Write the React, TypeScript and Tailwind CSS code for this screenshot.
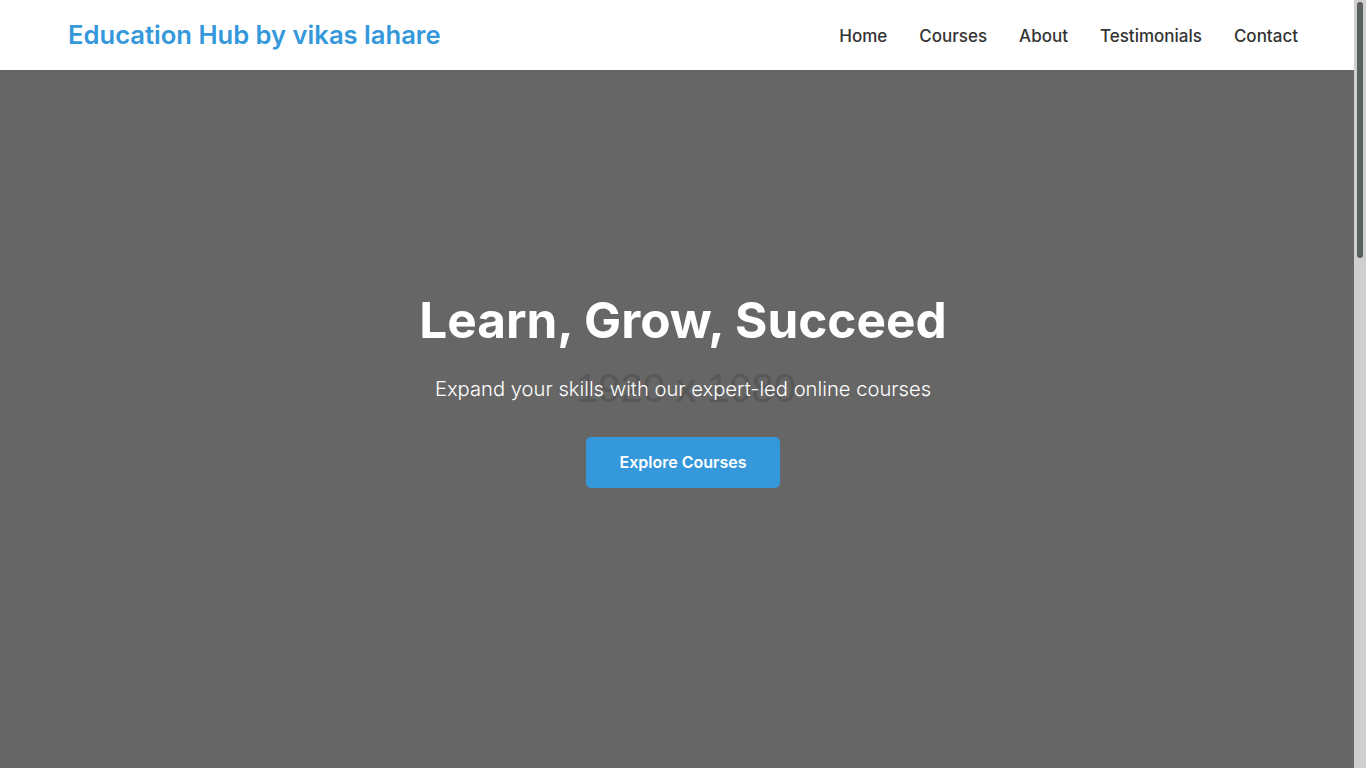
const font = { fontFamily: "Inter, 'Noto Sans', sans-serif" };

const navLinks = ["Home", "Courses", "About", "Testimonials", "Contact"];

const courses = [
  { title: "Web Development", text: "Build modern websites with HTML, CSS and JavaScript." },
  { title: "Data Science", text: "Analyse data and build models with Python." },
  { title: "UI/UX Design", text: "Design clean, usable interfaces from scratch." },
];

const testimonials = [
  { name: "Priya Sharma", text: "The courses are practical and easy to follow. I landed my first job!" },
  { name: "Rahul Verma", text: "Great instructors and a very supportive community." },
];

function Navbar() {
  return (
    <header className="sticky top-0 z-10 flex h-[70px] w-screen items-center justify-between bg-white px-[68px]">
      <a href="#" className="text-[25.6px] font-semibold text-[#3498db]">
        Education Hub by vikas lahare
      </a>
      <nav className="mt-[3px] flex items-center gap-8">
        {navLinks.map((l) => (
          <a key={l} href="#" className="text-[17px] font-medium text-[#333]">
            {l}
          </a>
        ))}
      </nav>
    </header>
  );
}

function Hero() {
  return (
    <section className="relative -mt-[70px] flex h-[768px] w-screen flex-col items-center bg-[#666] pt-[291px] text-center">
      {/* placeholder image label */}
      <span
        className="absolute left-[686px] top-[388px] -translate-x-1/2 -translate-y-1/2 text-[40px] text-[#585858]"
        style={{ fontFamily: "'Liberation Sans', Arial, sans-serif" }}
      >
        1920 x 1080
      </span>
      <div className="relative flex flex-col items-center">
        <h1 className="mb-[24px] text-[49.5px] font-bold leading-[1.2] text-white">Learn, Grow, Succeed</h1>
        <p className="mb-[32px] text-[20.2px] font-light text-white">
          Expand your skills with our expert-led online courses
        </p>
        <a href="#" className="rounded-[5px] bg-[#3498db] px-[34px] py-[13.5px] text-[16px] font-semibold text-white">
          Explore Courses
        </a>
      </div>
    </section>
  );
}

function Courses() {
  return (
    <section className="w-screen bg-[#f9f9f9] px-[68px] py-20">
      <h2 className="mb-12 text-center text-[36px] font-bold text-[#333]">Our Courses</h2>
      <div className="grid grid-cols-3 gap-8">
        {courses.map((c) => (
          <div key={c.title} className="overflow-hidden rounded-lg bg-white shadow-md">
            <div className="h-[200px] bg-[#ccc]" />
            <div className="p-6">
              <h3 className="mb-2 text-[20px] font-semibold text-[#333]">{c.title}</h3>
              <p className="mb-4 text-[15px] text-[#666]">{c.text}</p>
              <a href="#" className="inline-block rounded-[5px] bg-[#3498db] px-5 py-2 text-sm font-semibold text-white">
                Enroll Now
              </a>
            </div>
          </div>
        ))}
      </div>
    </section>
  );
}

function About() {
  return (
    <section className="w-screen bg-white px-[68px] py-20">
      <h2 className="mb-8 text-center text-[36px] font-bold text-[#333]">About Us</h2>
      <p className="mx-auto max-w-[800px] text-center text-[17px] leading-relaxed text-[#555]">
        Education Hub offers high-quality online courses taught by industry experts. Learn at your own pace,
        gain real-world skills and grow your career with us.
      </p>
    </section>
  );
}

function Testimonials() {
  return (
    <section className="w-screen bg-[#f9f9f9] px-[68px] py-20">
      <h2 className="mb-12 text-center text-[36px] font-bold text-[#333]">Testimonials</h2>
      <div className="grid grid-cols-2 gap-8">
        {testimonials.map((t) => (
          <div key={t.name} className="rounded-lg bg-white p-8 shadow-md">
            <p className="mb-4 text-[16px] italic text-[#555]">"{t.text}"</p>
            <p className="font-semibold text-[#3498db]">- {t.name}</p>
          </div>
        ))}
      </div>
    </section>
  );
}

function Contact() {
  return (
    <section className="w-screen bg-white px-[68px] py-20">
      <h2 className="mb-10 text-center text-[36px] font-bold text-[#333]">Contact Us</h2>
      <form className="mx-auto flex max-w-[600px] flex-col gap-4">
        <input className="rounded-[5px] border border-[#ddd] px-4 py-3" placeholder="Your Name" />
        <input className="rounded-[5px] border border-[#ddd] px-4 py-3" placeholder="Your Email" />
        <textarea className="h-[120px] rounded-[5px] border border-[#ddd] px-4 py-3" placeholder="Your Message" />
        <button type="button" className="rounded-[5px] bg-[#3498db] py-3 font-semibold text-white">
          Send Message
        </button>
      </form>
    </section>
  );
}

// page scrollbar as it appears in the reference (overlaid on the right edge)
function ScrollbarOverlay() {
  return (
    <div className="pointer-events-none fixed right-0 top-0 z-20 h-screen w-[12px] bg-[#cfcfcf] pt-[2px]">
      <div className="mx-auto h-[256px] w-[6px] rounded-full bg-[#59605f]" />
    </div>
  );
}

export default function App() {
  return (
    <div style={font} className="h-screen overflow-y-auto overflow-x-hidden [scrollbar-width:none]">
      <Navbar />
      <Hero />
      <Courses />
      <About />
      <Testimonials />
      <Contact />
      <footer className="w-screen bg-[#333] py-6 text-center text-sm text-white">
        © 2024 Education Hub by vikas lahare. All rights reserved.
      </footer>
      <ScrollbarOverlay />
    </div>
  );
}
